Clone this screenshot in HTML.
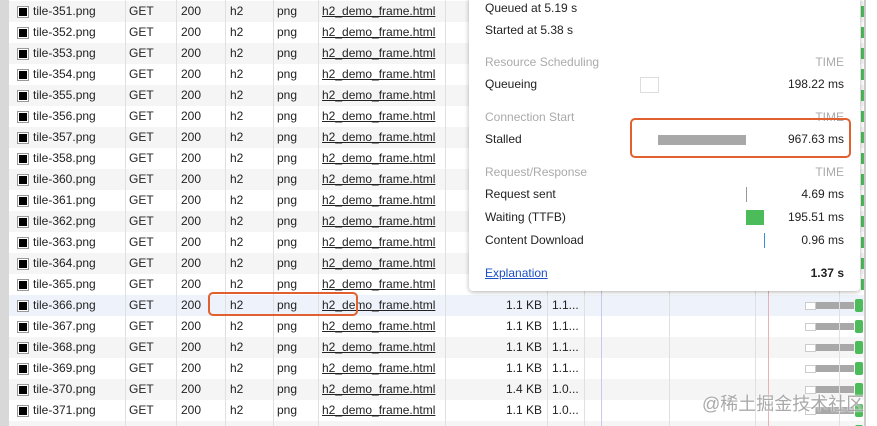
<!DOCTYPE html><html style="overflow:hidden;height:426px"><head><style>
body{margin:0;width:877px;height:426px;overflow:hidden;background:#fff;font-family:"Liberation Sans",Arial,sans-serif;font-size:12px;color:#222;position:relative}
.row{position:absolute;left:9px;width:856px;height:21px;line-height:21px}
.row.g{background:#f5f5f5}.row.sel{background:#eef3fb}
.c{position:absolute;top:0;white-space:nowrap}
.cb{position:absolute;left:8px;top:5px;width:8px;height:8px;border:1px solid #999;background:#fff;padding:1px}
.cb i{display:block;width:8px;height:8px;background:#000}
.vl{position:absolute;top:0;height:426px;width:1px;background:#e0e0e0}
u{text-decoration:underline}
.pop{position:absolute;left:469px;top:-4px;width:391px;height:295px;background:#fff;border-radius:4px;box-shadow:0 1px 5px rgba(0,0,0,.3);font-size:12px}
.pop .t{position:absolute;left:16px}
.pop .r{position:absolute;right:16px;text-align:right}
.lg{color:#aaa}
</style></head><body>
<div style="position:absolute;left:0;top:0;width:9px;height:426px;background:#d8d8d8"></div>
<div id="rows"></div>
<div class="vl" style="left:125px"></div><div class="vl" style="left:176px"></div><div class="vl" style="left:225px"></div><div class="vl" style="left:273px"></div><div class="vl" style="left:318px"></div><div class="vl" style="left:445px"></div><div class="vl" style="left:547px"></div><div class="vl" style="left:584px"></div><div class="vl" style="left:601px;background:#c8c8f0"></div><div class="vl" style="left:669px"></div><div class="vl" style="left:755px"></div><div class="vl" style="left:768px;background:#e8b0b8"></div><div class="vl" style="left:839px"></div>
<div style="position:absolute;left:864px;top:0;width:2px;height:426px;background:#ccc"></div>
<script>
var names=[351,352,353,354,355,356,357,358,360,361,362,363,364,365,366,367,368,369,370,371,372];
var h='';
names.forEach(function(n,i){
 var y=i*21+1;var cls=n==366?'sel':(i%2==0?'g':'');
 var sz=n==370?'1.4 KB':'1.1 KB';var tm=n>=370?'1.0...':'1.1...';
 h+='<div class="row '+cls+'" style="top:'+y+'px"><div class="cb"><i></i></div><span class="c" style="left:24px">tile-'+n+'.png</span><span class="c" style="left:120px">GET</span><span class="c" style="left:172px">200</span><span class="c" style="left:221px">h2</span><span class="c" style="left:268px">png</span><span class="c" style="left:313px"><u>h2_demo_frame.html</u></span>';
 if(i>=14){h+='<span class="c" style="left:497px">'+sz+'</span><span class="c" style="left:543px">'+tm+'</span><div style="position:absolute;left:796px;top:7px;width:9px;height:6px;border:1px solid #ccc;background:#fff"></div><div style="position:absolute;left:807px;top:7px;width:38px;height:7px;background:#a8a8a8"></div><div style="position:absolute;left:846px;top:4px;width:8px;height:13px;background:#4cbb5a;border-radius:2px"></div>';}
 else h+='<div style="position:absolute;left:852px;top:5px;width:3px;height:11px;background:#4cbb5a"></div>';
 h+='</div>';
});
document.getElementById('rows').innerHTML=h;
</script>
<div style="position:absolute;left:208px;top:292px;width:150px;height:24px;border:2px solid #e0602f;border-radius:5px;box-sizing:border-box"></div>
<div class="pop">
<div class="t" style="top:5px">Queued at 5.19 s</div>
<div class="t" style="top:27px">Started at 5.38 s</div>
<div class="t lg" style="top:59px">Resource Scheduling</div><div class="r lg" style="top:59px">TIME</div>
<div class="t" style="top:81px">Queueing</div><div style="position:absolute;left:171px;top:81px;width:17px;height:14px;border:1px solid #ddd"></div><div class="r" style="top:81px">198.22 ms</div>
<div class="t lg" style="top:114px">Connection Start</div><div class="r lg" style="top:114px">TIME</div>
<div class="t" style="top:136px">Stalled</div><div style="position:absolute;left:189px;top:139px;width:88px;height:10px;background:#a8a8a8"></div><div class="r" style="top:136px">967.63 ms</div>
<div class="t lg" style="top:169px">Request/Response</div><div class="r lg" style="top:169px">TIME</div>
<div class="t" style="top:191px">Request sent</div><div style="position:absolute;left:277px;top:191px;width:1px;height:15px;background:#999"></div><div class="r" style="top:191px">4.69 ms</div>
<div class="t" style="top:214px">Waiting (TTFB)</div><div style="position:absolute;left:277px;top:214px;width:18px;height:15px;background:#4cbb5a"></div><div class="r" style="top:214px">195.51 ms</div>
<div class="t" style="top:237px">Content Download</div><div style="position:absolute;left:295px;top:237px;width:1px;height:15px;background:#3a8fd6"></div><div class="r" style="top:237px">0.96 ms</div>
<div class="t" style="top:270px;color:#1a4fc4"><u>Explanation</u></div><div class="r" style="top:270px;font-weight:bold">1.37 s</div>
<div style="position:absolute;left:161px;top:122px;width:221px;height:40px;border:2px solid #e0602f;border-radius:5px;box-sizing:border-box"></div>
</div>
<div style="position:absolute;left:702px;top:390px;font-family:'Liberation Sans','Noto Sans CJK SC',sans-serif;font-size:18px;color:rgba(140,140,140,.75);text-shadow:0 0 1px #fff,0 0 2px #fff">@稀土掘金技术社区</div>
</body></html>
